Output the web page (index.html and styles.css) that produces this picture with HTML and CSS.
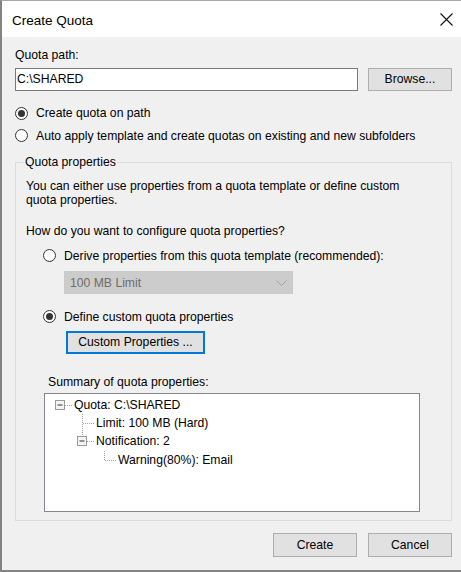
FILE: index.html
```html
<!DOCTYPE html>
<html>
<head>
<meta charset="utf-8">
<title>Create Quota</title>
<link rel="stylesheet" href="styles.css">
</head>
<body>
<div class="window">
  <div class="titlebar">
    <span class="title">Create Quota</span>
    <svg class="close" width="13" height="13" viewBox="0 0 13 13"><path d="M0.5 0.5 L12.5 12.5 M12.5 0.5 L0.5 12.5" stroke="#111" stroke-width="1.1" fill="none"/></svg>
  </div>
  <div class="content">
    <div class="path-label">Quota path:</div>
    <div class="path-row">
      <div class="textbox">C:\SHARED</div>
      <div class="btn browse">Browse...</div>
    </div>
    <div class="radio r1"><span class="dot checked"></span><span class="rlabel">Create quota on path</span></div>
    <div class="radio r2"><span class="dot"></span><span class="rlabel">Auto apply template and create quotas on existing and new subfolders</span></div>
    <fieldset class="group">
      <legend>Quota properties</legend>
      <div class="intro">You can either use properties from a quota template or define custom quota properties.</div>
      <div class="question">How do you want to configure quota properties?</div>
      <div class="radio sub r3"><span class="dot"></span><span class="rlabel">Derive properties from this quota template (recommended):</span></div>
      <div class="combo"><span>100 MB Limit</span><svg width="11" height="6" viewBox="0 0 11 6"><path d="M0.5 0.5 L5.5 5.5 L10.5 0.5" stroke="#a2a2a2" fill="none"/></svg></div>
      <div class="radio sub r4"><span class="dot checked"></span><span class="rlabel">Define custom quota properties</span></div>
      <div class="btn custom">Custom Properties ...</div>
      <div class="summary">Summary of quota properties:</div>
      <div class="tree">
        <div class="node lvl0">
          <svg width="19" height="18" viewBox="0 0 19 18"><rect x="0.5" y="4.5" width="9" height="9" fill="#f4f4f4" stroke="#9a9a9a"/><path d="M2.5 9 H7.5" stroke="#333"/><path d="M10 9.5 H17" stroke="#a0a0a0" stroke-dasharray="1 1"/></svg>
          <span>Quota: C:\SHARED</span>
        </div>
        <div class="node lvl1">
          <svg width="19" height="18" viewBox="0 0 19 18"><path d="M5.5 0 V18 M6 9.5 H17" stroke="#a0a0a0" stroke-dasharray="1 1" fill="none"/></svg>
          <span>Limit: 100 MB (Hard)</span>
        </div>
        <div class="node lvl1">
          <svg width="19" height="18" viewBox="0 0 19 18"><path d="M5.5 0 V4.5 M10 9.5 H17" stroke="#a0a0a0" stroke-dasharray="1 1" fill="none"/><rect x="0.5" y="4.5" width="9" height="9" fill="#f4f4f4" stroke="#9a9a9a"/><path d="M2.5 9 H7.5" stroke="#333"/></svg>
          <span>Notification: 2</span>
        </div>
        <div class="node lvl2">
          <svg width="19" height="18" viewBox="0 0 19 18"><path d="M5.5 0 V9 M6 9.5 H17" stroke="#a0a0a0" stroke-dasharray="1 1" fill="none"/></svg>
          <span>Warning(80%): Email</span>
        </div>
      </div>
    </fieldset>
    <div class="footer">
      <div class="btn">Create</div>
      <div class="btn">Cancel</div>
    </div>
  </div>
</div>
</body>
</html>
```

FILE: styles.css
```css
html, body {
  margin: 0;
  padding: 0;
}
body {
  font-family: "Liberation Sans", Arial, sans-serif;
  font-size: 12.2px;
  color: #000;
  background: #f0f0f0;
}
.window {
  width: 461px;
  height: 572px;
  box-sizing: border-box;
  border-left: 2px solid #838383;
  border-top: 1px solid #a8a8a8;
  border-bottom: 2px solid #838383;
  background: #f0f0f0;
  display: flex;
  flex-direction: column;
}
.titlebar {
  height: 36px;
  box-sizing: border-box;
  background: #fff;
  display: flex;
  justify-content: space-between;
  align-items: flex-start;
  padding: 12px 8px 0 10px;
}
.title {
  font-size: 13.5px;
  line-height: 16px;
}
.close {
  display: block;
}
.content {
  display: flex;
  flex-direction: column;
  padding: 0 9px 0 13px;
}
.path-label {
  line-height: 14px;
  margin-top: 11px;
}
.path-row {
  display: flex;
  margin-top: 6px;
  height: 23px;
}
.textbox {
  width: 343px;
  box-sizing: border-box;
  border: 1px solid #7a7a7a;
  background: #fff;
  padding-left: 1px;
  line-height: 21px;
}
.btn {
  box-sizing: border-box;
  border: 1px solid #adadad;
  background: #e1e1e1;
  text-align: center;
  width: 84px;
  height: 23px;
  line-height: 21px;
}
.browse {
  margin-left: auto;
}
.radio {
  display: flex;
  align-items: center;
  height: 16px;
}
.dot {
  width: 13px;
  height: 13px;
  box-sizing: border-box;
  border: 1px solid #333;
  border-radius: 50%;
  background: #fff;
  display: flex;
  align-items: center;
  justify-content: center;
  flex: none;
}
.dot.checked::after {
  content: "";
  width: 7px;
  height: 7px;
  border-radius: 50%;
  background: #333;
}
.rlabel {
  margin-left: 8px;
  line-height: 16px;
}
.r1 {
  margin-top: 14px;
}
.r2 {
  margin-top: 6.5px;
}
.group {
  margin: 11.5px 0 0 0;
  padding: 0 10px 8px 10px;
  border: 1px solid #dcdcdc;
  min-width: 0;
  display: flex;
  flex-direction: column;
}
.group legend {
  padding: 0 1px;
  margin-left: -2px;
  line-height: 14px;
}
.intro {
  width: 400px;
  line-height: 14px;
  margin-top: 10px;
}
.question {
  line-height: 14px;
  margin-top: 17px;
}
.sub {
  margin-left: 17px;
}
.r3 {
  margin-top: 9.5px;
}
.combo {
  margin: 7.5px 0 0 38px;
  width: 229px;
  height: 23px;
  box-sizing: border-box;
  border: 1px solid #cacaca;
  background: #cccccc;
  color: #6d6d6d;
  display: flex;
  align-items: center;
  justify-content: space-between;
  padding: 0 5px 0 5px;
}
.combo svg {
  display: block;
}
.r4 {
  margin-top: 14.5px;
}
.custom {
  margin: 6.5px 0 0 40px;
  width: 139px;
  border: 1px solid #0078d7;
  box-shadow: inset 0 0 0 1px #0078d7;
}
.summary {
  margin: 20.5px 0 0 22px;
  line-height: 14px;
}
.tree {
  margin: 4.5px 0 0 18px;
  width: 376px;
  height: 119px;
  box-sizing: border-box;
  border: 1px solid #828790;
  background: #fff;
  padding-top: 1.5px;
}
.node {
  display: flex;
  align-items: center;
  height: 18.33px;
  line-height: 18px;
}
.node svg {
  display: block;
  flex: none;
}
.lvl0 {
  padding-left: 10px;
}
.lvl1 {
  padding-left: 32px;
}
.lvl2 {
  padding-left: 54px;
}
.footer {
  display: flex;
  justify-content: flex-end;
  gap: 11px;
  margin-top: 12px;
}
.footer .btn {
  height: 24px;
  line-height: 22px;
}
```
